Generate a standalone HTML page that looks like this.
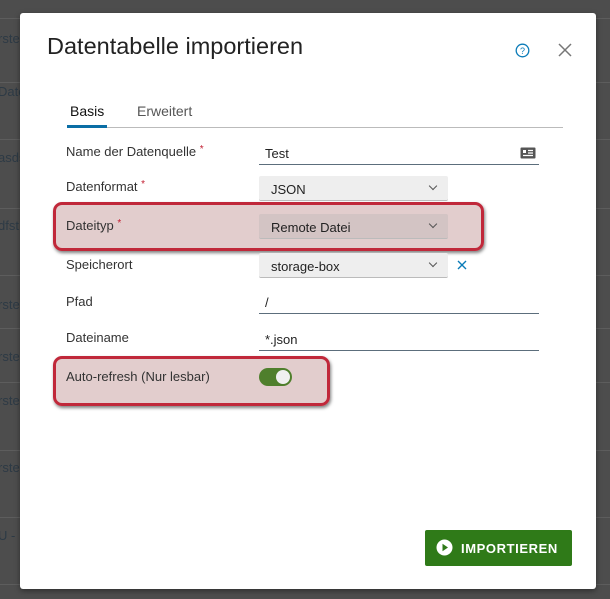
<!DOCTYPE html>
<html><head><meta charset="utf-8"><style>
*{box-sizing:border-box;margin:0;padding:0}
body{width:610px;height:599px;background:#4d4d4d;position:relative;overflow:hidden;font-family:"Liberation Sans",Arial,sans-serif}
.ln{position:absolute;left:0;width:610px;height:1px;background:#5d5d5d}
.bt{position:absolute;left:-2px;font-size:13px;color:#2d3a45}
.modal{position:absolute;left:20px;top:13px;width:576px;height:576px;background:#fff;border-radius:3px;box-shadow:0 2px 6px rgba(0,0,0,.4)}
.a{position:absolute}
.lbl{position:absolute;left:66px;font-size:13px;color:#333}
.req{color:#c21d30;font-size:10px;vertical-align:top}
.sel{position:absolute;left:259px;width:189px;height:25px;background:#eeeeee;border-radius:2px;border-bottom:1px solid #bbb;font-size:13px;color:#222;padding:6px 12px}
.sel:after{content:"";position:absolute;right:12px;top:7px;width:5px;height:5px;border-right:1px solid #555;border-bottom:1px solid #555;transform:rotate(45deg)}
.inp{position:absolute;left:259px;width:280px;height:23px;border-bottom:1px solid #5c6e7c;font-size:13px;color:#222;padding:4px 6px}
.hl{position:absolute;border:3px solid #c0283a;border-radius:9px;background:rgba(160,90,90,.3);box-shadow:1px 2px 3px rgba(0,0,0,.5)}
</style></head><body>
<div class="ln" style="top:18px"></div><div class="ln" style="top:82px"></div><div class="ln" style="top:139px"></div><div class="ln" style="top:208px"></div><div class="ln" style="top:275px"></div><div class="ln" style="top:328px"></div><div class="ln" style="top:382px"></div><div class="ln" style="top:450px"></div><div class="ln" style="top:517px"></div><div class="ln" style="top:584px"></div>
<div class="bt" style="top:31px">rste</div><div class="bt" style="top:84px">Date</div><div class="bt" style="top:150px">asds</div><div class="bt" style="top:218px">dfst</div><div class="bt" style="top:297px">rste</div><div class="bt" style="top:349px">rste</div><div class="bt" style="top:393px">rste</div><div class="bt" style="top:460px">rste</div><div class="bt" style="top:528px">U -</div>
<div class="modal"></div>
<div class="a" style="left:47px;top:33px;font-size:23.5px;color:#222">Datentabelle importieren</div>
<svg class="a" style="left:515px;top:43px" width="15" height="15" viewBox="0 0 15 15"><circle cx="7.5" cy="7.5" r="6.3" fill="none" stroke="#0a7bb8" stroke-width="1.3"/><text x="7.5" y="11" font-size="9" text-anchor="middle" fill="#0a7bb8" font-family="Liberation Sans">?</text></svg>
<svg class="a" style="left:558px;top:43px" width="14" height="14"><path d="M1 1L13 13M13 1L1 13" stroke="#777" stroke-width="1.5"/></svg>
<div class="a" style="left:70px;top:103px;font-size:14px;color:#111">Basis</div>
<div class="a" style="left:137px;top:103px;font-size:14px;color:#555">Erweitert</div>
<div class="a" style="left:67px;top:127px;width:496px;height:1px;background:#bbb"></div>
<div class="a" style="left:67px;top:125px;width:40px;height:3px;background:#0a6ea5"></div>
<div class="hl" style="left:53px;top:202px;width:431px;height:49px"></div>
<div class="hl" style="left:53px;top:356px;width:277px;height:50px"></div>
<div class="lbl" style="top:144px">Name der Datenquelle <span class="req">*</span></div>
<div class="inp" style="top:142px">Test</div>
<svg class="a" style="left:520px;top:147px" width="16" height="12"><rect x="0.5" y="0.5" width="15" height="11" rx="1" fill="#555"/><rect x="3" y="3" width="3" height="3" fill="#fff"/><path d="M8 3.5h5M8 6h5M3 8.5h10" stroke="#fff" stroke-width="1.2"/></svg>
<div class="lbl" style="top:179px">Datenformat <span class="req">*</span></div>
<div class="sel" style="top:176px">JSON</div>
<div class="lbl" style="top:218px">Dateityp <span class="req">*</span></div>
<div class="sel" style="top:214px;background:#d3c4c4">Remote Datei</div>
<div class="lbl" style="top:257px">Speicherort</div>
<div class="sel" style="top:253px">storage-box</div>
<svg class="a" style="left:457px;top:260px" width="10" height="10"><path d="M1 1L9 9M9 1L1 9" stroke="#0a7bb8" stroke-width="1.4"/></svg>
<div class="lbl" style="top:294px">Pfad</div>
<div class="inp" style="top:291px">/</div>
<div class="lbl" style="top:330px">Dateiname</div>
<div class="inp" style="top:328px">*.json</div>
<div class="lbl" style="top:369px">Auto-refresh (Nur lesbar)</div>
<div class="a" style="left:259px;top:368px;width:33px;height:18px;border-radius:9px;background:#4f7f2c"></div>
<div class="a" style="left:276px;top:370px;width:14px;height:14px;border-radius:7px;background:#f0f0f0"></div>
<div class="a" style="left:425px;top:530px;width:147px;height:36px;background:#2f7a18;border-radius:2px"></div>
<svg class="a" style="left:436px;top:539px" width="17" height="17"><circle cx="8.5" cy="8.5" r="8" fill="#fff"/><path d="M6.5 4.8L12 8.5L6.5 12.2Z" fill="#2f7a18"/></svg>
<div class="a" style="left:461px;top:541px;font-size:13px;font-weight:bold;color:#fff;letter-spacing:0.6px">IMPORTIEREN</div>
</body></html>
